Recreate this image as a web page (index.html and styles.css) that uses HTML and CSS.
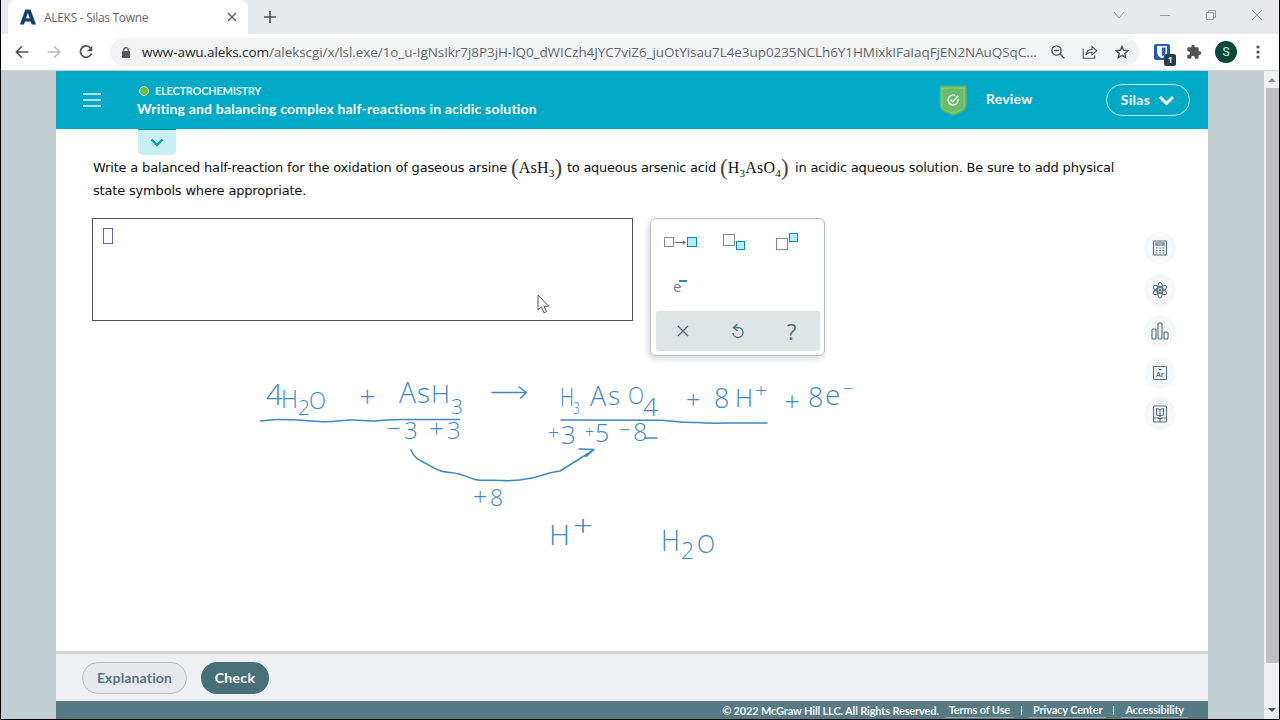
FILE: index.html
```html
<!DOCTYPE html>
<html lang="en">
<head>
    <meta charset="utf-8">
    <title>ALEKS - Silas Towne</title>
    <link rel="stylesheet" href="styles.css">
</head>
<body>
    <div class="window">
        <!-- Browser tabs -->
        <div class="tab-strip">
            <div class="tab">
                <svg class="favicon" width="16" height="16" viewBox="0 0 16 16"><path d="M0 15.5L5.3.5h5.2L16 15.5h-4.3l-1-3H5l-1 3zM6 9.3h3.7L7.9 4z" fill="#123f72"/></svg>
                <span class="tab-title">ALEKS - Silas Towne</span>
                <svg class="tab-close" width="10" height="10" viewBox="0 0 10 10"><path d="M1 1l8 8M9 1L1 9" stroke="#5a5d60" stroke-width="1.4"/></svg>
            </div>
            <svg class="new-tab" width="12" height="12" viewBox="0 0 12 12"><path d="M6 0v12M0 6h12" stroke="#505356" stroke-width="1.7"/></svg>
            <div class="window-buttons">
                <svg width="12" height="12" viewBox="0 0 12 12"><path d="M1 3l5 6 5-6"/></svg>
                <svg width="12" height="12" viewBox="0 0 12 12"><path d="M1 6.5h10"/></svg>
                <svg width="12" height="12" viewBox="0 0 12 12"><path d="M1.5 3.5h7v7h-7zM3.5 3.5v-2h7v7h-2"/></svg>
                <svg width="12" height="12" viewBox="0 0 12 12"><path d="M1 1l10 10M11 1L1 11"/></svg>
            </div>
        </div>

        <!-- Browser toolbar -->
        <div class="toolbar">
            <div class="nav-buttons">
                <svg width="14" height="14" viewBox="0 0 14 14"><path d="M13.5 7H1.5M7 1.3L1.3 7 7 12.7" fill="none" stroke="#4f5255" stroke-width="1.6"/></svg>
                <svg width="14" height="14" viewBox="0 0 14 14"><path d="M.5 7h12M7 1.3L12.7 7 7 12.7" fill="none" stroke="#b9bbbd" stroke-width="1.5"/></svg>
                <svg width="14" height="14" viewBox="0 0 14 14"><path d="M11.6 3A5.7 5.7 0 1 0 12.5 8.6" fill="none" stroke="#4f5255" stroke-width="1.7"/><path d="M13.4.7v5.5H7.9z" fill="#4f5255"/></svg>
            </div>
            <div class="address-bar">
                <svg class="lock" width="8" height="11" viewBox="0 0 8 11"><rect y="4" width="8" height="7" rx="1" fill="#55585b"/><path d="M1.8 5V2.9a2.2 2.2 0 0 1 4.4 0V5" fill="none" stroke="#55585b" stroke-width="1.3"/></svg>
                <span class="url"><b>www-awu.aleks.com</b>/alekscgi/x/lsl.exe/1o_u-IgNsIkr7j8P3jH-lQ0_dWICzh4JYC7viZ6_juOtYisau7L4e3up0235NCLh6Y1HMixkIFaIaqFjEN2NAuQSqC...</span>
                <div class="address-icons">
                    <svg width="14" height="14" viewBox="0 0 14 14"><circle cx="5.5" cy="5.5" r="4.6"/><path d="M3 5.5h5M9 9l4.3 4.3"/></svg>
                    <svg width="16" height="14" viewBox="0 0 16 14"><path d="M1.2 3.5v9.8h11.6v-3M4 10c.6-3.7 2.6-5.5 6-5.6V1.5l4.8 4.3-4.8 4V7.2C7.3 7.2 5.5 8 4 10z" stroke-width="1.1"/></svg>
                    <svg width="14" height="14" viewBox="0 0 14 14"><path d="M7 1.4l1.7 3.9 4.2.4-3.2 2.8.9 4.1L7 10.4l-3.6 2.2.9-4.1L1.1 5.7l4.2-.4z"/></svg>
                </div>
            </div>
            <div class="extensions">
                <div class="bitwarden">
                    <svg width="18" height="18" viewBox="0 0 18 18"><rect x="1" y="1" width="16" height="16" rx="2" fill="#2458bd"/><path d="M4 3h10v6c0 3-2 5-5 6.3C6 14 4 12 4 9z" fill="#fff"/><path d="M9 4.5h3.5V9c0 2-1.2 3.3-3.5 4.5z" fill="#2458bd"/></svg>
                    <span class="ext-count">1</span>
                </div>
                <svg class="puzzle" width="16" height="16" viewBox="0 0 24 24"><path fill="#505356" d="M20.5 11H19V7c0-1.1-.9-2-2-2h-4V3.5a2.5 2.5 0 0 0-5 0V5H4c-1.1 0-2 .9-2 2v3.8h1.5a2.7 2.7 0 0 1 0 5.4H2V20c0 1.1.9 2 2 2h3.8v-1.5a2.7 2.7 0 0 1 5.4 0V22H17c1.1 0 2-.9 2-2v-4h1.5a2.5 2.5 0 0 0 0-5z"/></svg>
                <span class="avatar">S</span>
                <svg width="4" height="14" viewBox="0 0 4 14" fill="#4f5255"><circle cx="2" cy="2" r="1.6"/><circle cx="2" cy="7" r="1.6"/><circle cx="2" cy="12" r="1.6"/></svg>
            </div>
        </div>

        <div class="viewport">
            <main class="app">
                <header class="header">
                    <svg class="menu" width="18" height="14" viewBox="0 0 18 14"><path d="M0 1h18M0 7h18M0 13h18" stroke="#e6faff" stroke-width="1.6"/></svg>
                    <div class="heading">
                        <div class="subject"><span class="dot"></span>ELECTROCHEMISTRY</div>
                        <div class="topic">Writing and balancing complex half-reactions in acidic solution</div>
                        <div class="expand">
                            <svg width="14" height="9" viewBox="0 0 14 9"><path d="M1.5 1.5L7 7l5.5-5.5" fill="none" stroke="#079dad" stroke-width="2.4"/></svg>
                        </div>
                    </div>
                    <svg class="badge" width="28" height="31" viewBox="0 0 28 31"><path d="M.5.5h27V20c0 5-4 7.5-13.5 10.500C4.500 27.500.5 25 .5 20z" fill="#62b76a"/><path d="M3 3h22v17c0 4-4 6-11 8-7-2-11-4-11-8z" fill="#6aba6c" stroke="#9bd25f"/><path d="M16.500 10.600A5 5 0 1 0 19 14" fill="none" stroke="#e9fbe9" stroke-width="1.5"/><path d="M11.5 14.5l2.200 2.200 5.500-6" fill="none" stroke="#e9fbe9" stroke-width="1.5"/></svg>
                    <span class="review">Review</span>
                    <button class="user">Silas
                        <svg width="17" height="11" viewBox="0 0 17 11"><path d="M2 2l6.5 6.5L15 2" fill="none" stroke="#fff" stroke-width="3"/></svg>
                    </button>
                </header>

                <section class="content">
                    <div class="question">
                        <div class="line"><span class="q1">Write a balanced half-reaction for the oxidation of gaseous arsine</span><span class="formula f1"><i>(</i>AsH<sub>3</sub><i>)</i></span><span class="q2">to aqueous arsenic acid</span><span class="formula f2"><i>(</i>H<sub>3</sub>AsO<sub>4</sub><i>)</i></span><span class="q3">in acidic aqueous solution. Be sure to add physical</span></div>
                        <div class="line"><span>state symbols where appropriate.</span></div>
                    </div>

                    <div class="work">
                        <div class="answer"><span class="placeholder"></span></div>
                        <div class="palette">
                            <div class="palette-keys">
                                <svg width="34" height="18" viewBox="0 0 34 18"><rect x="1.5" y="4.5" width="9" height="9" fill="none" stroke="#7d8d91"/><path d="M12 9.5h9" stroke="#66797e"/><path d="M20 7.5l3 2-3 2z" fill="#4c6970"/><rect x="24.5" y="4.5" width="9" height="9" fill="#aeeffc" stroke="#158a9e"/></svg>
                                <svg width="25" height="18" viewBox="0 0 25 18"><rect x="2.5" y="1.5" width="11" height="11" fill="none" stroke="#7d8d91"/><rect x="15.5" y="8.5" width="8" height="8" fill="#aeeffc" stroke="#158a9e"/></svg>
                                <svg width="25" height="18" viewBox="0 0 25 18"><rect x="2.5" y="5.5" width="11" height="11" fill="none" stroke="#7d8d91"/><rect x="15.5" y=".5" width="8" height="8" fill="#aeeffc" stroke="#158a9e"/></svg>
                                <span class="electron">e<sup></sup></span>
                            </div>
                            <div class="palette-actions">
                                <svg width="12" height="12" viewBox="0 0 12 12"><path d="M1 1l10 10M11 1L1 11"/></svg>
                                <svg width="14" height="16" viewBox="0 0 14 16"><path d="M6.5 1L2.5 4.5 6.5 8M2.5 4.500H7a5 5 0 1 1-5 5.5"/></svg>
                                <span>?</span>
                            </div>
                        </div>
                    </div>

                    <!-- Side tools -->
                    <nav class="tools">
                        <span><svg width="16" height="16" viewBox="0 0 16 16"><rect x="1.5" y="1" width="13" height="14" rx="1"/><rect x="4" y="3" width="8" height="2"/><path d="M4 8h1.5M7.3 8h1.5M10.5 8H12M4 10.5h1.5M7.3 10.5h1.5M10.5 10.5H12M4 13h1.5M7.3 13h1.5M10.5 13H12"/></svg></span>
                        <span><svg width="16" height="16" viewBox="0 0 16 16"><ellipse cx="8" cy="8" rx="2.6" ry="7.5"/><ellipse cx="8" cy="8" rx="2.6" ry="7.5" transform="rotate(60 8 8)"/><ellipse cx="8" cy="8" rx="2.6" ry="7.5" transform="rotate(120 8 8)"/><circle cx="8" cy="8" r="1"/></svg></span>
                        <span><svg width="18" height="18" viewBox="0 0 18 18"><rect x="1" y="7" width="4" height="10" rx="1"/><rect x="7" y="1" width="4" height="16" rx="1"/><rect x="13" y="10" width="4" height="7" rx="1"/></svg></span>
                        <span><svg width="16" height="16" viewBox="0 0 16 16"><rect x="1.5" y="1.5" width="13" height="13" rx="1"/><path d="M7 4.5h2.5"/><text x="8" y="12.3">Ar</text></svg></span>
                        <span><svg width="16" height="18" viewBox="0 0 16 18"><rect x="1.5" y="1" width="13" height="16" rx="1"/><path d="M4.5 3.500L8 4.500l3.500-1V10L8 11l-3.500-1zM8 4.500V11M1.500 13h5l1.500 1 1.500-1h5M8 14v3"/></svg></span>
                    </nav>

                    <!-- Pen notes over the page -->
                    <svg class="notes" width="620" height="200" viewBox="250 370 620 200">
                        <g class="ink">
                            <path d="M260.5 421c6 0 9-1.5 17-1.5 18 0 27 1 42 2s24-2 34-1.5 15 1.5 24 .8 12-1.3 24-1.3h58"/>
                            <path d="M492 392.5h34M519 387l7.5 5.5-6 5.5"/>
                            <path d="M561 420l100 .2c12 .5 14 2 24 2s20 1.5 42 .8h40"/>
                            <path d="M411 450c3 7 6 9 12 12s11 7 18 9 11 1 18 3 10 4 16 5.5 19 .5 27 1 20-.5 30-2.5 18-6 28-7l32-20M579 449l15 .5-8 7"/>
                            <path d="M645 438h12"/>
                        </g>
                        <g class="hand">
                            <text x="266" y="405" font-size="29">4</text>
                            <text x="281" y="408" font-size="25" textLength="17" lengthAdjust="spacingAndGlyphs">H</text>
                            <text x="298" y="415" font-size="21">2</text>
                            <text x="309" y="409" font-size="24" textLength="17" lengthAdjust="spacingAndGlyphs">O</text>
                            <text x="359" y="407" font-size="29">+</text>
                            <text x="399" y="403" font-size="30" textLength="17" lengthAdjust="spacingAndGlyphs">A</text>
                            <text x="417" y="403" font-size="28">s</text>
                            <text x="431" y="403" font-size="26" textLength="19" lengthAdjust="spacingAndGlyphs">H</text>
                            <text x="451" y="414" font-size="21">3</text>
                            <text x="387" y="437" font-size="24">−</text>
                            <text x="404" y="439" font-size="24">3</text>
                            <text x="429" y="438" font-size="26">+</text>
                            <text x="447" y="439" font-size="24">3</text>
                            <text x="560" y="406" font-size="26" textLength="14" lengthAdjust="spacingAndGlyphs">H</text>
                            <text x="573" y="414" font-size="17" textLength="7" lengthAdjust="spacingAndGlyphs">3</text>
                            <text x="590" y="406" font-size="27">A</text>
                            <text x="608" y="405" font-size="26">s</text>
                            <text x="628" y="404" font-size="24" textLength="16" lengthAdjust="spacingAndGlyphs">O</text>
                            <text x="643" y="416" font-size="26">4</text>
                            <text x="686" y="409" font-size="25">+</text>
                            <text x="714" y="408" font-size="27">8</text>
                            <text x="735" y="407" font-size="26" textLength="18" lengthAdjust="spacingAndGlyphs">H</text>
                            <text x="755" y="398" font-size="21">+</text>
                            <text x="784" y="411" font-size="28">+</text>
                            <text x="808" y="407" font-size="27">8</text>
                            <text x="825" y="405" font-size="28">e</text>
                            <text x="843" y="395" font-size="18">−</text>
                            <text x="548" y="440" font-size="21" textLength="11" lengthAdjust="spacingAndGlyphs">+</text>
                            <text x="561" y="444" font-size="26">3</text>
                            <text x="585" y="438" font-size="19" textLength="9" lengthAdjust="spacingAndGlyphs">+</text>
                            <text x="595" y="442" font-size="25">5</text>
                            <text x="619" y="437" font-size="20">−</text>
                            <text x="633" y="441" font-size="25">8</text>
                            <text x="473" y="506" font-size="25">+</text>
                            <text x="490" y="506" font-size="23">8</text>
                            <text x="549" y="545" font-size="28" textLength="21" lengthAdjust="spacingAndGlyphs">H</text>
                            <text x="573" y="536" font-size="30" textLength="20" lengthAdjust="spacingAndGlyphs">+</text>
                            <text x="661" y="551" font-size="29" textLength="19" lengthAdjust="spacingAndGlyphs">H</text>
                            <text x="681" y="559" font-size="23">2</text>
                            <text x="697" y="553" font-size="26" textLength="18" lengthAdjust="spacingAndGlyphs">O</text>
                        </g>
                    </svg>
                    <svg class="cursor" width="12" height="20" viewBox="0 0 12 20"><path d="M1 1v15l3.5-3.2 2.5 6 2.5-1.1-2.5-5.5h4.7z" fill="#fff" stroke="#55585b"/></svg>
                </section>

                <div class="actions">
                    <button class="explanation">Explanation</button>
                    <button class="check">Check</button>
                </div>
                <footer class="footer">
                    <span class="copyright">© 2022 McGraw Hill LLC. All Rights Reserved.</span>
                    <a class="terms">Terms of Use</a>
                    <i></i>
                    <a class="privacy">Privacy Center</a>
                    <i></i>
                    <a class="access">Accessibility</a>
                </footer>
            </main>
            <div class="scrollbar">
                <svg width="8" height="5" viewBox="0 0 8 5"><path d="M0 5l4-4 4 4z" fill="#929496"/></svg>
                <div class="thumb"></div>
                <svg width="8" height="5" viewBox="0 0 8 5"><path d="M0 0l4 4 4-4z" fill="#47494b"/></svg>
            </div>
        </div>
    </div>
</body>
</html>
```
FILE: styles.css
```css
* {
    box-sizing: border-box;
}

body {
    margin: 0;
    background: #000;
    font-family: Lato, "Liberation Sans", sans-serif;
    overflow: hidden;
}

svg {
    display: block;
    flex-shrink: 0;
}

button {
    font: inherit;
    padding: 0;
}

.window {
    width: 1278px;
    height: 719px;
    margin-left: 1px;
    display: flex;
    flex-direction: column;
    background: #fff;
}

/* Browser */
.tab-strip {
    height: 34px;
    flex-shrink: 0;
    display: flex;
    align-items: center;
    background: #e7e9ec;
    padding-left: 7px;
}

.tab {
    width: 240px;
    height: 34px;
    display: flex;
    align-items: center;
    background: #fff;
    border-radius: 8px 8px 0 0;
    padding: 0 11px 0 12px;
}

.tab-title {
    flex: 1;
    margin-left: 8px;
    font: 12px "Open Sans", sans-serif;
    letter-spacing: -0.3px;
    color: #65686b;
    white-space: nowrap;
}

.new-tab {
    margin-left: 16px;
}

.window-buttons {
    margin-left: auto;
    margin-top: -5px;
    padding-right: 16px;
    display: flex;
    gap: 34px;
    fill: none;
    stroke: #9a9c9f;
}

.toolbar {
    height: 37px;
    flex-shrink: 0;
    display: flex;
    align-items: center;
    border-bottom: 1px solid #c8d4d7;
    padding-right: 19px;
}

.nav-buttons {
    width: 109px;
    padding-left: 14px;
    display: flex;
    gap: 18px;
}

.address-bar {
    width: 1029px;
    height: 28px;
    display: flex;
    align-items: center;
    background: #f1f3f4;
    border-radius: 14px;
    padding: 0 10px 0 12px;
}

.url {
    width: 896px;
    margin-left: 12px;
    font: 13.5px "Open Sans", sans-serif;
    letter-spacing: -0.07px;
    color: #65686b;
    white-space: nowrap;
}

.url b {
    font-weight: 400;
    color: #26282a;
}

.address-icons {
    margin-left: auto;
    display: flex;
    gap: 17px;
    fill: none;
    stroke: #505356;
    stroke-width: 1.4;
}

.extensions {
    flex: 1;
    display: flex;
    align-items: center;
    margin-left: 14px;
}

.bitwarden {
    position: relative;
}

.ext-count {
    position: absolute;
    left: 11px;
    top: 11px;
    width: 12px;
    height: 12px;
    border-radius: 2px;
    background: #243d50;
    color: #fff;
    font: bold 9px/12px "Open Sans", sans-serif;
    text-align: center;
}

.puzzle {
    margin-left: 15px;
}

.avatar {
    width: 22px;
    height: 22px;
    margin: 0 19px 0 13px;
    border-radius: 50%;
    background: #064a3a;
    color: #e4f2ee;
    font: 12px/22px Roboto, sans-serif;
    text-align: center;
}

/* Page */
.viewport {
    flex: 1;
    display: flex;
    background: #c0cdd1;
    padding-left: 55px;
}

.app {
    width: 1152px;
    display: flex;
    flex-direction: column;
    background: #fff;
}

.header {
    position: relative;
    z-index: 1;
    height: 58px;
    display: flex;
    align-items: center;
    background: #00a9c6;
    color: #fff;
    padding: 0 18px 0 27px;
    font-weight: 700;
}

.heading {
    position: relative;
    width: 801px;
    margin-left: 36px;
    margin-right: 1px;
    padding-top: 1px;
}

.subject {
    display: flex;
    align-items: center;
    height: 17px;
    font-size: 11px;
    letter-spacing: -0.25px;
    color: #dff8fc;
}

.dot {
    width: 10px;
    height: 10px;
    margin: 0 6px 0 2px;
    border: 1px solid #d5f0b0;
    border-radius: 50%;
    background: #6fbe45;
}

.topic {
    height: 20px;
    font-size: 14px;
    line-height: 20px;
    letter-spacing: 0.18px;
}

/* tab hanging below the header */
.expand {
    position: absolute;
    left: 1px;
    top: 48px;
    width: 38px;
    height: 26px;
    display: flex;
    align-items: center;
    justify-content: center;
    background: #c8eff3;
    border-top: 1px solid #078ba0;
    border-radius: 0 0 5px 5px;
}

.review {
    margin: -4px 0 0 19px;
    font-size: 14px;
    letter-spacing: 0.2px;
}

.user {
    width: 84px;
    height: 32px;
    margin-left: auto;
    padding-bottom: 2px;
    display: flex;
    align-items: center;
    justify-content: center;
    gap: 8px;
    border: 1px solid #bdf2fa;
    border-radius: 16px;
    background: none;
    color: #fff;
    font-size: 14px;
    letter-spacing: 0.3px;
    font-weight: 700;
}

.user svg {
    margin-top: 2px;
}

.content {
    position: relative;
    flex: 1;
    padding: 27px 0 0 36px;
}

.question {
    font: 13px/23px "DejaVu Sans", sans-serif;
    letter-spacing: -0.18px;
    color: #111;
    padding-left: 1px;
}

.line {
    display: flex;
    height: 23px;
    white-space: nowrap;
}

.q1 {
    width: 418px;
}

.q2 {
    width: 153px;
    letter-spacing: -0.26px;
}

.q3 {
    letter-spacing: -0.2px;
}

.formula {
    display: flex;
    align-items: center;
    font: 16px/22px "Liberation Serif", serif;
    letter-spacing: 0.25px;
}

.formula i {
    font: 23px/20px "Liberation Serif", serif;
    letter-spacing: 0;
    color: #444;
}

.formula sub {
    font-size: 11px;
    margin-top: 11px;
}

.f1 {
    width: 56px;
}

.f2 {
    width: 75px;
}

.work {
    display: flex;
    align-items: flex-start;
    margin-top: 16px;
}

.answer {
    width: 541px;
    height: 103px;
    border: 1px solid #4f5052;
    padding: 9px 10px;
}

.placeholder {
    display: block;
    width: 10px;
    height: 16px;
    border: 1px solid #6d61b5;
}

.palette {
    width: 175px;
    height: 138px;
    margin-left: 17px;
    border: 1px solid #b9bfc2;
    border-radius: 6px;
    padding: 14px 4px 4px 5px;
    box-shadow: -2px 3px 6px #d5dadd;
}

.palette-keys {
    display: grid;
    grid-template-columns: 58px 53px 1fr;
    grid-template-rows: 36px 42px;
    padding-left: 7px;
}

.electron {
    display: flex;
    font: 15px/34px "Open Sans", sans-serif;
    color: #6d7f84;
    padding-left: 10px;
}

.electron sup {
    width: 8px;
    height: 2px;
    margin: 11px 0 0 -2px;
    background: #2098ad;
}

.palette-actions {
    height: 40px;
    display: flex;
    align-items: center;
    justify-content: space-around;
    background: #dfe5e7;
    border-radius: 3px;
    fill: none;
    stroke: #526d74;
    stroke-width: 1.4;
    color: #526d74;
}

.palette-actions span {
    width: 12px;
    font: 22px/40px "Open Sans", sans-serif;
}

.tools {
    position: absolute;
    left: 1088px;
    top: 103px;
    display: flex;
    flex-direction: column;
    gap: 9.5px;
}

.tools span {
    width: 32px;
    height: 32px;
    display: flex;
    align-items: center;
    justify-content: center;
    border-radius: 50%;
    background: #f5f7f9;
    fill: none;
    stroke: #54747b;
    stroke-width: 1.1;
}

.tools text {
    font: bold 7px "Open Sans", sans-serif;
    fill: #54747b;
    stroke: none;
    text-anchor: middle;
}

.notes {
    position: absolute;
    left: 194px;
    top: 241px;
}

.ink {
    fill: none;
    stroke: #3f87c5;
    stroke-width: 1.5;
    stroke-linecap: round;
    stroke-linejoin: round;
}

.hand {
    font-family: "Open Sans", sans-serif;
    font-weight: 300;
    fill: #3f87c5;
}

.cursor {
    position: absolute;
    left: 481px;
    top: 165px;
}

.actions {
    height: 50px;
    display: flex;
    align-items: center;
    gap: 14px;
    border-top: 3px solid #d3d7d8;
    background: #edf1f3;
    padding-left: 26px;
    font-size: 14px;
    font-weight: 700;
}

.explanation {
    width: 105px;
    height: 32px;
    border: 1px solid #b5bfc4;
    border-radius: 16px;
    background: #e6eaed;
    color: #587580;
    letter-spacing: 0.15px;
}

.check {
    width: 68px;
    height: 32px;
    border: 0;
    border-radius: 16px;
    background: #466f78;
    color: #fff;
    letter-spacing: 0.3px;
}

.footer {
    height: 18px;
    display: flex;
    align-items: center;
    justify-content: flex-end;
    background: #577b84;
    padding-right: 20px;
    color: #f0f6f7;
    font-size: 11px;
    letter-spacing: -0.16px;
    font-weight: 700;
    white-space: nowrap;
}

.footer a {
    height: 15px;
    line-height: 14px;
    border-bottom: 1px solid #8fa9af;
    padding: 0 4px;
}

.footer i {
    width: 1px;
    height: 9px;
    margin: 0 7px;
    background: #d8e4e6;
}

.copyright {
    margin-right: 6px;
}

.scrollbar {
    width: 15px;
    margin-left: auto;
    display: flex;
    flex-direction: column;
    align-items: center;
    background: #eef0f1;
    padding: 6px 0;
}

.thumb {
    width: 13px;
    height: 575px;
    margin: 6px 0 auto 2px;
    background: #bfbfc1;
}
```
